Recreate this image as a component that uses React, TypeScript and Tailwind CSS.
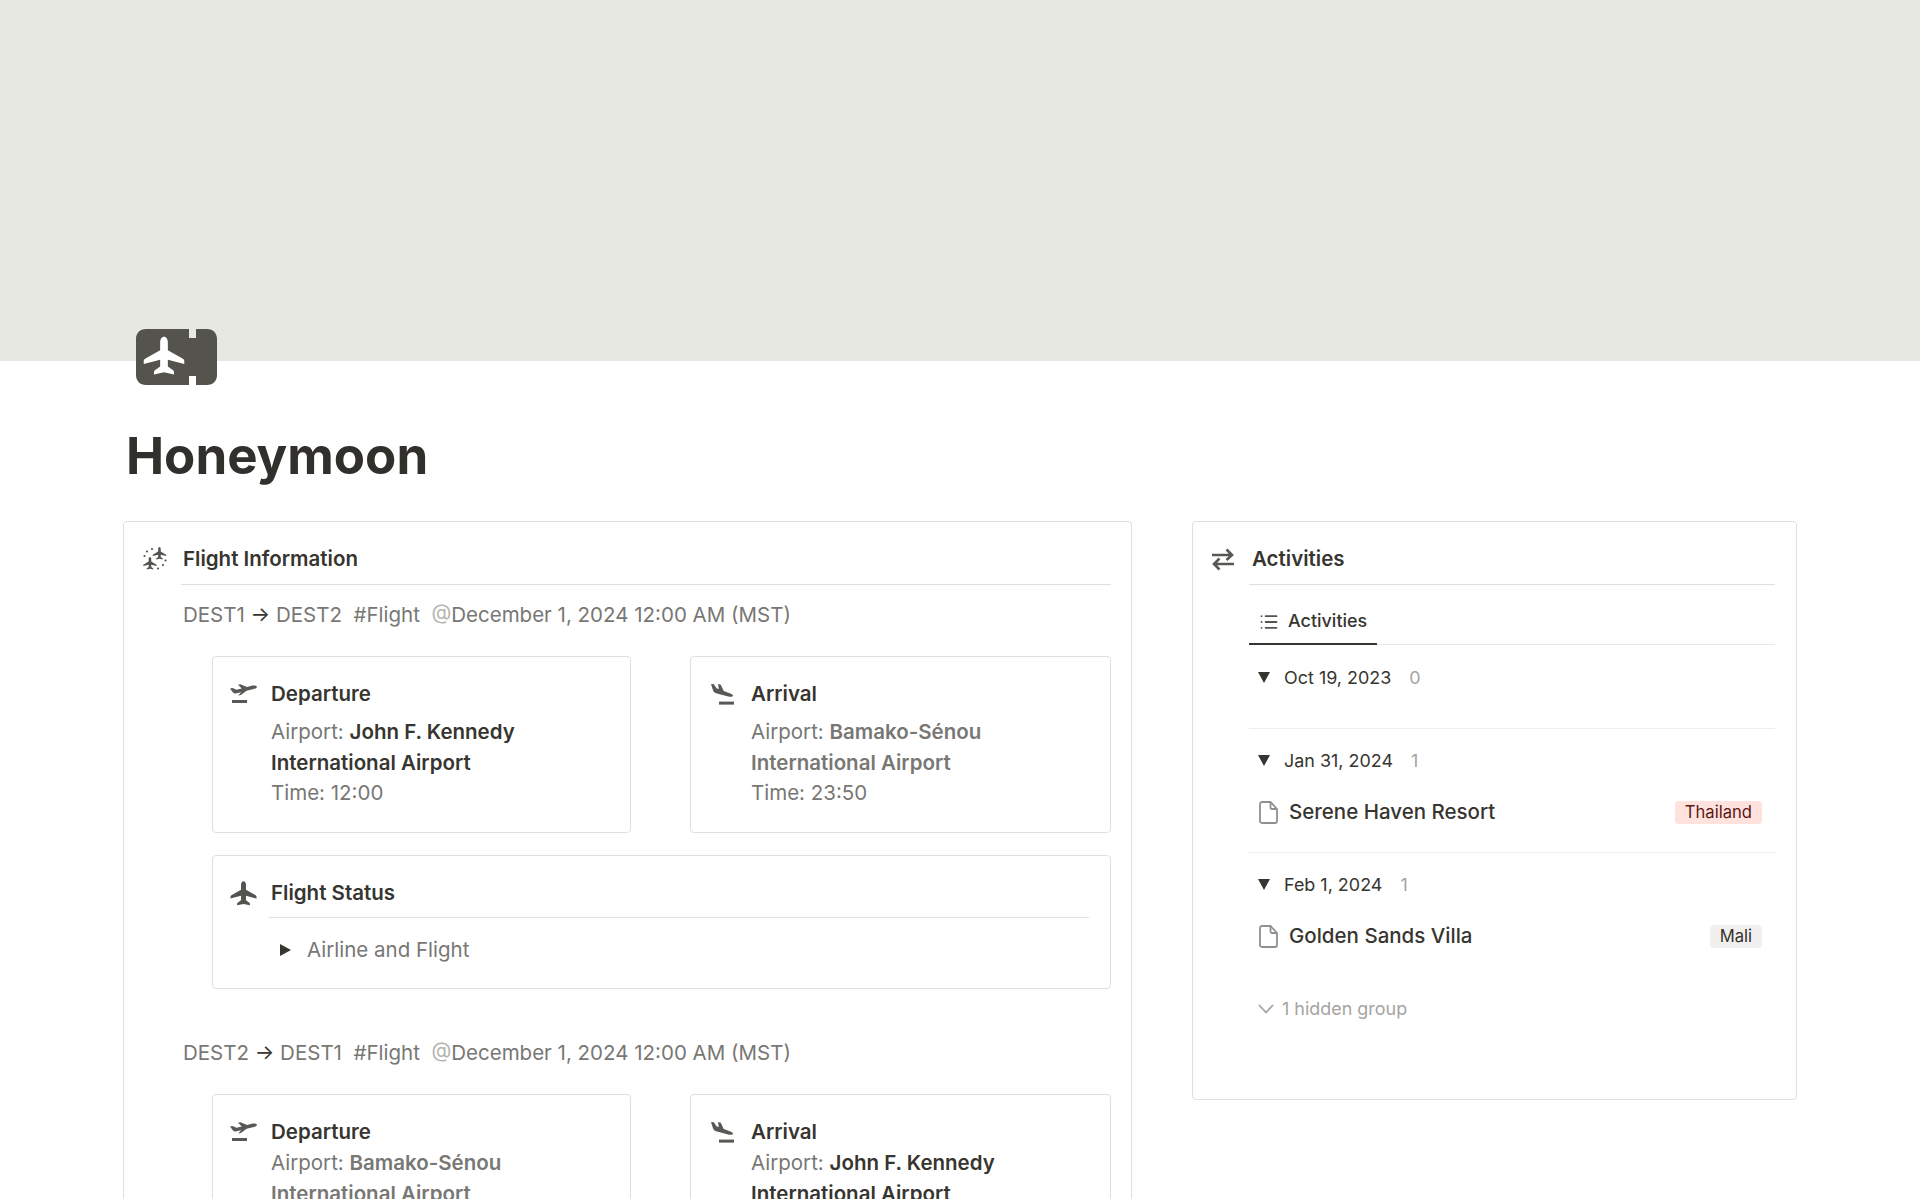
import React from "react";
import { List } from "lucide-react";

const PLANE_UP =
  "M12 1c-1.300 0-2.200 1.400-2.200 3.200v4.500L1.200 13.600c-.5.3-.8.8-.8 1.400v1.500l9.400-2.400v3.900l-3 2.200c-.4.3-.5.6-.5 1v1.300l5.700-1.200 5.700 1.200v-1.300c0-.4-.1-.7-.5-1l-3-2.200v-3.900l9.400 2.400V15c0-.6-.3-1.100-.8-1.400l-8.600-4.900V4.200C14.200 2.400 13.300 1 12 1z";

function PlaneIcon({ className }: { className?: string }) {
  return (
    <svg viewBox="0 0 24 24" className={className} fill="currentColor">
      <path d={PLANE_UP} />
    </svg>
  );
}

function TakeoffIcon() {
  return (
    <svg viewBox="0 0 27 20" className="h-[20px] w-[27px] text-[#5a5854]" fill="currentColor">
      <path d="M26.800 2.600c-.5-1-3-1.300-5.200-.8L17 2.900 10.400.2 8 .8l3.800 3.700-5.300 1.300L2.600 3.900 0 4.600l3 4c.5.600 1.200 1 2.300.8l6-1.200-3.200 3.300 2.800-.6 5.700-4.200 7.300-1.800c2-.5 3.200-1.400 2.900-2.300z" />
      <rect x="2" y="16" width="15" height="3" />
    </svg>
  );
}

function LandIcon() {
  return (
    <svg viewBox="0 0 24 21" className="h-[21px] w-[24px] text-[#5a5854]" fill="currentColor">
      <path d="M0 .2 2.600 0l3.200 4.500 2 .6L7 0l2.800.7 2.900 6.400 6 2.100c2.400.8 3.600 1.900 3.300 2.900-.3.900-2.500 1-4.800.3L6 9.600C3.500 8.800 2.700 7.700 2.100 6.500z" />
      <rect x="8" y="17.600" width="15" height="3" />
    </svg>
  );
}

function TicketIcon() {
  return (
    <svg viewBox="0 0 81 56" className="h-[56px] w-[81px]">
      <path
        fill="#55534e"
        d="M10 0h43v9h7V0h11c6 0 10 4 10 10v36c0 6-4 10-10 10H60v-9h-7v9H10C4 56 0 52 0 46V10C0 4 4 0 10 0z"
      />
      <g transform="translate(7 6) scale(1.750)">
        <path fill="#fff" d={PLANE_UP} />
      </g>
    </svg>
  );
}

function StarPlanesIcon() {
  return (
    <svg viewBox="0 0 24 24" className="h-[24px] w-[24px] text-[#55534e]" fill="currentColor">
      <g transform="translate(9.500 -0.500) scale(0.58)">
        <path d={PLANE_UP} />
      </g>
      <g transform="translate(0 9.500) scale(0.58)">
        <path d={PLANE_UP} />
      </g>
      <circle cx="9" cy="2" r="1.100" />
      <circle cx="4" cy="4.500" r="1.100" />
      <circle cx="1.500" cy="9" r="1.100" />
      <circle cx="22.500" cy="13.500" r="1.100" />
      <circle cx="20" cy="18" r="1.100" />
      <circle cx="15" cy="21.500" r="1.100" />
    </svg>
  );
}

function SwapIcon() {
  return (
    <svg
      viewBox="0 0 22 22"
      className="h-[23px] w-[22px] text-[#5a5854]"
      fill="none"
      stroke="currentColor"
      strokeWidth="2.600"
    >
      <path d="M0 6.500h20M14.500 1l5.500 5.500-5.500 5" />
      <path d="M22 15.500H2M7.500 10 2 15.500 7.500 21" />
    </svg>
  );
}

function PageIcon() {
  return (
    <svg
      viewBox="0 0 19 23"
      className="h-[23px] w-[19px] shrink-0 text-[#91908d]"
      fill="none"
      stroke="currentColor"
      strokeWidth="1.800"
    >
      <path d="M3 1h8.500L18 8v12c0 1.200-.8 2-2 2H3c-1.200 0-2-.8-2-2V3c0-1.200.8-2 2-2z" />
      <path d="M11.500 1v5.500c0 1 .5 1.500 1.500 1.500h5" />
    </svg>
  );
}

function TriangleDown() {
  return (
    <svg viewBox="0 0 12 11" className="h-[11px] w-[12px] shrink-0 -translate-y-px text-[#37352f]" fill="currentColor">
      <path d="M0 0h12L6 11z" />
    </svg>
  );
}

function RouteLine({ from, to, gap }: { from: string; to: string; gap: string }) {
  return (
    <div className="h-[30px] whitespace-pre pl-[2px] text-[20.5px] leading-[30px] text-[#787774]">
      {from} <span className="text-[#37352f]">→</span> {to}
      {gap}#Flight{gap}
      <span className="text-[#b4b3b0]">@</span>December 1, 2024 12:00 AM (MST)
    </div>
  );
}

function InfoCard({
  kind,
  name,
  time,
  dark,
  compact,
}: {
  kind: "Departure" | "Arrival";
  name: [string, string];
  time?: string;
  dark: boolean;
  compact?: boolean;
}) {
  const isDep = kind === "Departure";
  return (
    <div className={`h-[177px] rounded-[4px] border border-[#dfdfdd] pl-[18px] pt-[21px] ${isDep ? "w-[419px]" : "w-[421px]"}`}>
      <div className="flex h-[32px] items-center">
        <div className={`flex shrink-0 justify-start ${isDep ? "-ml-[1px] w-[40px]" : "ml-[2px] w-[39px]"}`}>
          {isDep ? <TakeoffIcon /> : <LandIcon />}
        </div>
        <div className="pl-[1px] text-[20.5px] font-semibold text-[#37352f]">{kind}</div>
      </div>
      <div className={`${isDep ? "pl-[40px]" : "pl-[42px]"} text-[20.5px] leading-[30.500px] text-[#787774] ${compact ? "" : "pt-[7px]"}`}>
        <div>
          Airport: <span className={`font-semibold ${dark ? "text-[#37352f]" : ""}`}>{name[0]}</span>
        </div>
        <div className={`font-semibold ${dark ? "text-[#37352f]" : ""}`}>{name[1]}</div>
        {time && <div>Time: {time}</div>}
      </div>
    </div>
  );
}

function Group({
  date,
  count,
  gapTop,
  children,
}: {
  date: string;
  count: number;
  gapTop: string;
  children?: React.ReactNode;
}) {
  return (
    <div className={gapTop}>
      <div className="flex h-[32px] items-center pl-[9px] text-[17.950px] text-[#37352f]">
        <TriangleDown />
        <span className="ml-[14px]">{date}</span>
        <span className="ml-[18px] text-[#a5a4a1]">{count}</span>
      </div>
      {children}
    </div>
  );
}

function Row({ title, tag, tagClass }: { title: string; tag: string; tagClass: string }) {
  return (
    <div className="mt-[19px] flex h-[32px] items-center pl-[10px] pr-[13px]">
      <PageIcon />
      <span className="ml-[11px] text-[20.5px] font-medium text-[#37352f]">{title}</span>
      <span className={`ml-auto flex h-[23px] items-center rounded-[4px] px-[10px] text-[16.600px] ${tagClass}`}>{tag}</span>
    </div>
  );
}

export default function App() {
  return (
    <div className="h-screen overflow-hidden bg-white font-['Inter','Liberation_Sans',sans-serif] text-[#37352f] [font-optical-sizing:none]">
      <div className="h-[361px] bg-[#e8e8e3]" />
      <div className="-mt-[32px] pl-[136px]">
        <TicketIcon />
      </div>
      <h1 className="mt-[41px] h-[60px] pl-[126px] text-[51px] font-bold leading-[60px] text-[#32302c]">Honeymoon</h1>
      <div className="mt-[35px] flex items-start gap-[60px] pl-[123px]">
        <section className="w-[1009px] shrink-0 rounded-[4px] border border-[#dfdfdd] pb-[30px] pl-[19px] pr-[20px] pt-[21px]">
          <div className="flex h-[32px] items-center">
            <div className="w-[38px] shrink-0">
              <StarPlanesIcon />
            </div>
            <div className="pl-[2px] pt-[1px] text-[20.5px] font-semibold">Flight Information</div>
          </div>
          <div className="ml-[38px] mt-[9px] border-t border-[#dfdfdd]" />
          <div className="ml-[38px] pt-[15px]">
            <RouteLine from="DEST1" to="DEST2" gap="  " />
            <div className="ml-[31px] mt-[26px] flex justify-between">
              <InfoCard kind="Departure" name={["John F. Kennedy", "International Airport"]} time="12:00" dark />
              <InfoCard kind="Arrival" name={["Bamako-Sénou", "International Airport"]} time="23:50" dark={false} />
            </div>
            <div className="ml-[31px] mt-[22px] h-[134px] rounded-[4px] border border-[#dfdfdd] pl-[18px] pr-[21px] pt-[21px]">
              <div className="flex h-[32px] items-center">
                <div className="-ml-[1px] w-[39px] shrink-0">
                  <PlaneIcon className="h-[27px] w-[27px] text-[#55534e]" />
                </div>
                <div className="pl-[2px] pt-[1px] text-[20.5px] font-semibold">Flight Status</div>
              </div>
              <div className="ml-[38px] mt-[8px] border-t border-[#dfdfdd]" />
              <div className="ml-[49px] mt-[17px] flex h-[30px] items-center text-[20.5px] text-[#787774]">
                <svg viewBox="0 0 11 12" className="h-[12px] w-[11px] text-[#37352f]" fill="currentColor">
                  <path d="M0 0v12l11-6z" />
                </svg>
                <span className="ml-[16px]">Airline and Flight</span>
              </div>
            </div>
            <div className="mt-[49px]">
              <RouteLine from="DEST2" to="DEST1" gap="  " />
            </div>
            <div className="ml-[31px] mt-[26px] flex justify-between">
              <InfoCard kind="Departure" name={["Bamako-Sénou", "International Airport"]} dark={false} compact />
              <InfoCard kind="Arrival" name={["John F. Kennedy", "International Airport"]} dark compact />
            </div>
          </div>
        </section>
        <section className="h-[579px] w-[605px] shrink-0 rounded-[4px] border border-[#dfdfdd] pl-[19px] pr-[21px] pt-[21px]">
          <div className="flex h-[32px] items-center">
            <div className="w-[37px] shrink-0">
              <SwapIcon />
            </div>
            <div className="pl-[3px] pt-[1px] text-[20.5px] font-semibold">Activities</div>
          </div>
          <div className="ml-[37px] mt-[9px] border-t border-[#dfdfdd]" />
          <div className="ml-[37px]">
            <div className="mt-[9px] flex h-[51px] border-b border-[#e9e9e7]">
              <div className="-mb-px flex w-[128px] items-center gap-[9px] border-b-2 border-[#37352f] pl-[10px] pt-[6px] text-[17.950px] font-medium">
                <List className="h-[20px] w-[20px] text-[#55534e]" strokeWidth={2.200} />
                Activities
              </div>
            </div>
            <Group date="Oct 19, 2023" count={0} gapTop="mt-[17px]" />
            <div className="mt-[34px] border-t border-[#eeeeec]" />
            <Group date="Jan 31, 2024" count={1} gapTop="mt-[16px]">
              <Row title="Serene Haven Resort" tag="Thailand" tagClass="bg-[#ffe2dd] text-[#5d1715]" />
            </Group>
            <div className="mt-[24px] border-t border-[#eeeeec]" />
            <Group date="Feb 1, 2024" count={1} gapTop="mt-[16px]">
              <Row title="Golden Sands Villa" tag="Mali" tagClass="bg-[#f1f0ef] text-[#32302c]" />
            </Group>
            <div className="mt-[41px] flex h-[32px] items-center pl-[9px] text-[17.950px] text-[#a5a4a1]">
              <svg viewBox="0 0 16 10" className="h-[10px] w-[16px]" fill="none" stroke="currentColor" strokeWidth="1.800">
                <path d="M1 1l7 7.500L15 1" />
              </svg>
              <span className="ml-[8px]">1 hidden group</span>
            </div>
          </div>
        </section>
      </div>
    </div>
  );
}
